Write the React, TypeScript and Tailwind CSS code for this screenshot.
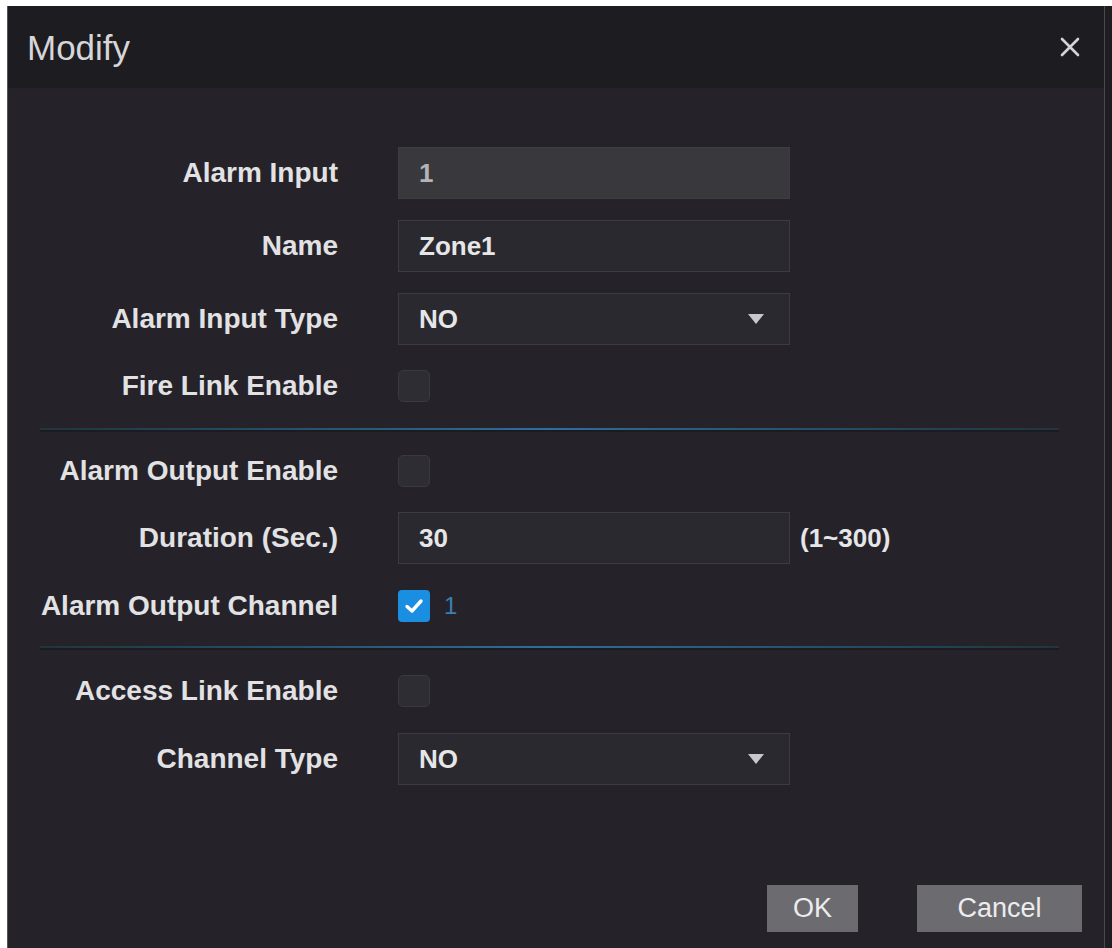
import React from "react";

const font = { fontFamily: '"Liberation Sans", Arial, sans-serif' };

function Label({ children }: { children: React.ReactNode }) {
  return (
    <div className="w-[330px] shrink-0 text-right text-[28px] font-semibold text-[#e2e2e4] leading-none">
      {children}
    </div>
  );
}

function Row({ label, children, className = "" }: { label: string; children: React.ReactNode; className?: string }) {
  return (
    <div className={`flex items-center ${className}`}>
      <Label>{label}</Label>
      <div className="ml-[60px] flex items-center">{children}</div>
    </div>
  );
}

function TextBox({ value, disabled = false }: { value: string; disabled?: boolean }) {
  return (
    <div
      className={`w-[392px] h-[52px] flex items-center px-[20px] text-[26px] font-semibold border leading-none ${
        disabled ? "bg-[#39383d] border-[#3d3c41] text-[#b4b4b6]" : "bg-[#2a292f] border-[#3c3b41] text-[#e6e6e8]"
      }`}
    >
      {value}
    </div>
  );
}

function Select({ value }: { value: string }) {
  return (
    <div className="w-[392px] h-[52px] flex items-center justify-between pl-[20px] pr-[24px] text-[26px] font-semibold border leading-none bg-[#2a292f] border-[#3c3b41] text-[#e6e6e8]">
      <span>{value}</span>
      <svg width="18" height="12" viewBox="0 0 18 12">
        <path d="M1 1 L17 1 L9 11 Z" fill="#c8c8cc" />
      </svg>
    </div>
  );
}

function Check({ checked = false }: { checked?: boolean }) {
  if (checked) {
    return (
      <div className="w-[32px] h-[32px] rounded-[4px] bg-[#1a8ee0] flex items-center justify-center">
        <svg width="20" height="16" viewBox="0 0 20 16">
          <path d="M3 8.5 L8 13 L17 3" fill="none" stroke="#ffffff" strokeWidth="3.4" strokeLinecap="round" strokeLinejoin="round" />
        </svg>
      </div>
    );
  }
  return <div className="w-[32px] h-[32px] rounded-[5px] bg-[#2e2d33] border border-[#3a3940]" />;
}

function Separator({ className = "" }: { className?: string }) {
  return (
    <div className={`ml-[32px] mr-[45px] ${className}`}>
      <div className="h-[2px] bg-gradient-to-r from-[#1f3540] via-[#2c6f9c] to-[#1f3540]" />
      <div className="h-[2px] bg-[#1c1b20]" />
    </div>
  );
}

export default function App() {
  return (
    <div className="min-h-[948px] bg-white pt-[6px] pl-[7px]" style={font}>
      <div className="w-[1105px] h-[942px] bg-[#252329] border-l border-[#55545a] flex">
        <div className="flex-1 flex flex-col">
          <div className="h-[82px] bg-[#1d1c20] flex items-center justify-between pl-[19px] pr-[24px] shrink-0">
            <span className="text-[35px] text-[#d6d6d8] leading-none">Modify</span>
            <svg width="20" height="20" viewBox="0 0 20 20">
              <path d="M2 2 L18 18 M18 2 L2 18" stroke="#d4d4d6" strokeWidth="2.6" strokeLinecap="round" />
            </svg>
          </div>
          <div className="flex flex-col pt-[59px]">
            <Row label="Alarm Input">
              <TextBox value="1" disabled />
            </Row>
            <Row label="Name" className="mt-[21px]">
              <TextBox value="Zone1" />
            </Row>
            <Row label="Alarm Input Type" className="mt-[21px]">
              <Select value="NO" />
            </Row>
            <Row label="Fire Link Enable" className="mt-[25px]">
              <Check />
            </Row>
            <Separator className="mt-[26px]" />
            <Row label="Alarm Output Enable" className="mt-[23px]">
              <Check />
            </Row>
            <Row label="Duration (Sec.)" className="mt-[25px]">
              <TextBox value="30" />
              <span className="ml-[10px] text-[26px] font-semibold leading-none text-[#e6e6e8]">(1~300)</span>
            </Row>
            <Row label="Alarm Output Channel" className="mt-[26px]">
              <Check checked />
              <span className="ml-[14px] text-[24px] leading-none text-[#3b7fb4]">1</span>
            </Row>
            <Separator className="mt-[24px]" />
            <Row label="Access Link Enable" className="mt-[25px]">
              <Check />
            </Row>
            <Row label="Channel Type" className="mt-[26px]">
              <Select value="NO" />
            </Row>
            <div className="flex justify-end gap-[59px] pr-[22px] mt-[100px]">
              <div className="w-[91px] h-[47px] bg-[#6c6c70] flex items-center justify-center text-[27px] leading-none text-[#ececee]">OK</div>
              <div className="w-[165px] h-[47px] bg-[#6c6c70] flex items-center justify-center text-[27px] leading-none text-[#ececee]">Cancel</div>
            </div>
          </div>
        </div>
        <div className="w-[1px] bg-[#4a494e]" />
        <div className="w-[7px] bg-[#1e1d22]" />
      </div>
    </div>
  );
}
